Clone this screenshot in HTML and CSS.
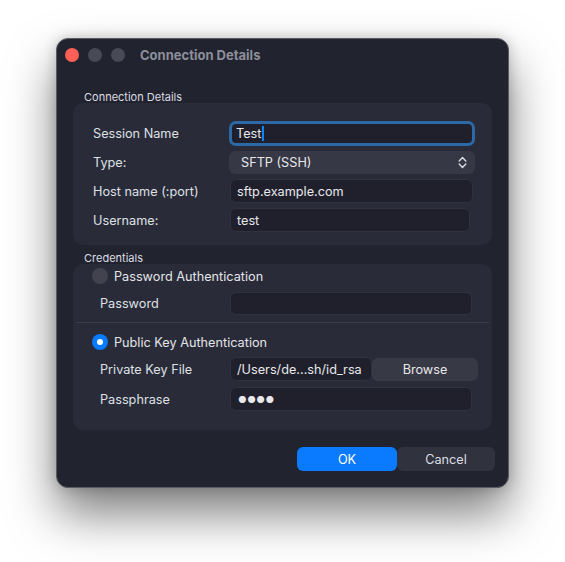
FILE: index.html
```html
<!DOCTYPE html>
<html>
<head>
<meta charset="utf-8">
<link rel="stylesheet" href="styles.css">
</head>
<body>
<div class="window">
  <div class="titlebar">
    <div class="lights">
      <span class="light red"></span>
      <span class="light"></span>
      <span class="light"></span>
    </div>
    <div class="title">Connection Details</div>
  </div>
  <div class="content">
    <div class="section-label">Connection Details</div>
    <div class="box box-conn">
      <div class="row">
        <div class="label">Session Name</div>
        <div class="field focus"><span class="val">Test</span><span class="caret"></span></div>
      </div>
      <div class="row">
        <div class="label">Type:</div>
        <div class="popup"><span class="val">SFTP (SSH)</span>
          <svg class="chev" width="9" height="13" viewBox="0 0 9 13"><path d="M1.2 5 L4.5 1.6 L7.8 5 M1.2 8 L4.5 11.4 L7.8 8" fill="none" stroke="#d8d9de" stroke-width="1.5" stroke-linecap="round" stroke-linejoin="round"/></svg>
        </div>
      </div>
      <div class="row">
        <div class="label">Host name (:port)</div>
        <div class="field host"><span class="val">sftp.example.com</span></div>
      </div>
      <div class="row">
        <div class="label">Username:</div>
        <div class="field user"><span class="val">test</span></div>
      </div>
    </div>

    <div class="section-label cred">Credentials</div>
    <div class="box box-cred">
      <div class="radio-row">
        <span class="radio"></span><span class="radio-label">Password Authentication</span>
      </div>
      <div class="row inset pw">
        <div class="label">Password</div>
        <div class="field short"></div>
      </div>
      <div class="sep"></div>
      <div class="radio-row second">
        <span class="radio on"></span><span class="radio-label">Public Key Authentication</span>
      </div>
      <div class="row inset key">
        <div class="label">Private Key File</div>
        <div class="keygroup">
          <div class="field keyfield"><span class="val">/Users/de...sh/id_rsa</span></div>
          <div class="browse">Browse</div>
        </div>
      </div>
      <div class="row inset phrase">
        <div class="label">Passphrase</div>
        <div class="field short"><span class="dots">●●●●</span></div>
      </div>
    </div>

    <div class="buttons">
      <div class="btn ok">OK</div>
      <div class="btn cancel">Cancel</div>
    </div>
  </div>
</div>
</body>
</html>
```
FILE: styles.css
```css
html {
  height: 100%;
  margin: 0;
  background: #ffffff;
}
body {
  box-sizing: border-box;
  min-height: 100%;
  margin: 0;
  padding: 38px 0 0 56px;
  font-family: Inter, "Noto Sans", "Liberation Sans", sans-serif;
  font-size: 12.7px;
  color: #dfe0e6;
}
.window {
  box-sizing: border-box;
  width: 453px;
  height: 450px;
  background: #21232f;
  border: 1px solid #5b5c63;
  border-radius: 12px;
  box-shadow: 0 26px 48px rgba(0, 0, 0, 0.5), 0 0 14px rgba(0, 0, 0, 0.2);
  overflow: hidden;
}
.titlebar {
  height: 31px;
  display: flex;
  align-items: center;
  padding-left: 8px;
}
.lights {
  display: flex;
  gap: 9px;
}
.light {
  width: 14px;
  height: 14px;
  border-radius: 50%;
  background: #484a56;
}
.light.red {
  background: #fe5f57;
}
.title {
  margin-left: 15px;
  font-weight: 700;
  font-size: 13px;
  color: #8d8f9b;
}
.content {
  padding: 0 16px 0 16px;
}
.section-label {
  font-size: 11px;
  line-height: 12px;
  color: #dcdde3;
  margin: 21px 0 0 11px;
  height: 12px;
}
.section-label.cred {
  margin-top: 7px;
}
.box {
  background: #292b38;
  border-radius: 10px;
}
.box-conn {
  padding: 18px 18px 13px 20px;
  display: flex;
  flex-direction: column;
  gap: 5px;
}
.row {
  display: flex;
  align-items: center;
  height: 24px;
}
.label {
  width: 136px;
  flex: none;
  color: #dfe0e6;
}
.field {
  box-sizing: border-box;
  flex: 1;
  height: 24px;
  background: #1f202c;
  border: 1px solid #30323e;
  border-radius: 6px;
  display: flex;
  align-items: center;
  padding-left: 6px;
  color: #e8e8ec;
}
.field.focus {
  border: 3px solid #2b6aa6;
  height: 25px;
  border-radius: 7px;
  padding-left: 4px;
  margin-right: -1px;
}
.caret {
  width: 2px;
  height: 15px;
  background: #0a84ff;
  margin-left: 1px;
}
.field.host {
  margin: 0 1px 0 1px;
}
.field.user {
  margin: 0 4px 0 1px;
}
.popup {
  box-sizing: border-box;
  flex: 1;
  height: 23px;
  background: #363845;
  border-radius: 6px;
  display: flex;
  align-items: center;
  justify-content: space-between;
  padding: 0 8px 0 12px;
  margin-right: -1px;
  color: #e8e8ec;
}
.chev {
  display: block;
}
.box-cred {
  padding: 4px 3px 19px 3px;
  display: flex;
  flex-direction: column;
}
.radio-row {
  display: flex;
  align-items: center;
  height: 16px;
  padding-left: 16px;
}
.radio-row.second {
  margin-top: 11px;
}
.radio {
  box-sizing: border-box;
  width: 16px;
  height: 16px;
  border-radius: 50%;
  background: #42434e;
  margin-right: 6px;
  display: flex;
  align-items: center;
  justify-content: center;
}
.radio.on {
  background: #0a7aff;
}
.radio.on::after {
  content: "";
  width: 6px;
  height: 6px;
  border-radius: 50%;
  background: #ffffff;
}
.radio-label {
  color: #e3e4e9;
}
.row.inset {
  padding-left: 24px;
  padding-right: 17px;
}
.row.inset .label {
  width: 130px;
}
.row.pw {
  margin-top: 8px;
  height: 23px;
}
.field.short {
  height: 23px;
  margin-right: 0;
}
.row.phrase .field.short {
  height: 24px;
}
.sep {
  height: 1px;
  background: #3a3c48;
  margin-top: 7px;
}
.row.key {
  margin-top: 7px;
  padding-right: 11px;
}
.row.phrase {
  margin-top: 6px;
}
.keygroup {
  flex: 1;
  display: flex;
  height: 24px;
}
.field.keyfield {
  flex: none;
  width: 142px;
}
.browse {
  flex: 1;
  background: #373945;
  border-radius: 6px;
  display: flex;
  align-items: center;
  justify-content: center;
  color: #e8e8ec;
  margin-top: 1px;
}
.dots {
  font-size: 9.5px;
  letter-spacing: 0.5px;
  color: #e8e8ec;
  padding-left: 1px;
}
.buttons {
  display: flex;
  justify-content: flex-end;
  margin-top: 17px;
  margin-right: -3px;
}
.btn {
  height: 24px;
  display: flex;
  align-items: center;
  justify-content: center;
  border-radius: 6px;
}
.btn.ok {
  width: 100px;
  background: #0a7aff;
  color: #ffffff;
}
.btn.cancel {
  width: 98px;
  background: #30323e;
  color: #dcdde3;
}
```
